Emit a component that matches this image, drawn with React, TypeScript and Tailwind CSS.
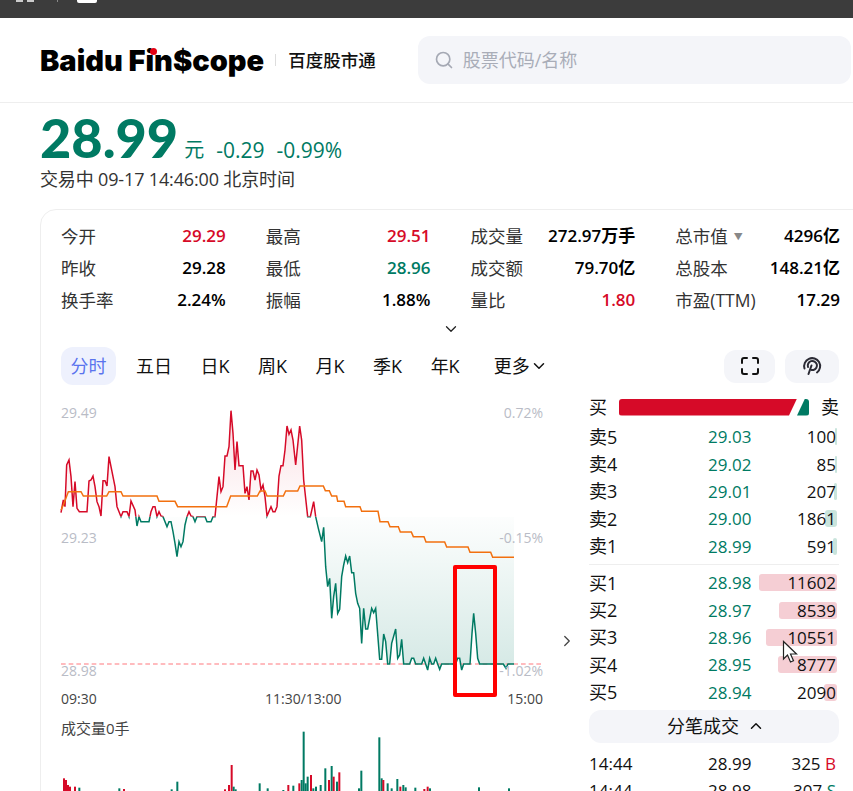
import { ChevronDown, ChevronRight, ChevronUp, Search } from "lucide-react";

// chart coords are 3x page px, origin at page (40,400)
const lineLeft = [[63,338],[70,300],[75,320],[80,195],[87,180],[93,230],[99,320],[105,245],[111,325],[118,335],[141,335],[147,243],[153,240],[159,228],[165,260],[171,305],[177,320],[183,348],[189,242],[195,242],[201,258],[207,170],[213,200],[225,260],[231,320],[243,350],[249,335],[261,335],[267,350],[273,303],[285,330],[291,378],[297,350],[303,365],[327,365],[333,335],[339,320],[345,320],[351,350],[357,335],[363,348],[369,350],[381,380],[387,365],[393,365],[399,395],[405,430],[411,470],[417,425],[423,440],[429,425],[435,375],[441,350],[447,335],[453,348],[459,350],[465,365],[471,350],[495,350],[501,365],[513,365],[519,350],[525,350],[531,290],[537,230],[543,275],[549,260],[555,168],[561,168],[567,140],[573,32],[579,100],[585,210],[591,125],[597,197],[609,197],[615,280],[621,260],[627,300],[633,213],[639,213],[645,240],[651,210],[657,225],[663,270],[669,255],[675,290],[681,348],[693,320],[699,335],[705,335],[711,320],[717,228],[723,197],[729,197],[735,150],[741,78],[747,103],[753,90],[759,120],[767,195]];
const lineRight = [[29,78],[35,120],[41,240],[53,350],[61,350],[71,305],[77,350],[85,385],[95,425],[101,382],[107,500],[113,560],[119,535],[125,655],[131,590],[137,550],[143,640],[149,628],[155,530],[161,495],[167,468],[173,488],[179,468],[185,518],[191,518],[197,580],[203,610],[209,625],[215,730],[221,625],[227,687],[233,687],[245,625],[251,638],[257,625],[269,778],[275,778],[281,702],[287,725],[293,792],[299,792],[305,730],[317,687],[323,775],[329,765],[335,718],[341,792],[359,792],[365,775],[371,775],[377,792],[395,792],[401,775],[407,792],[413,810],[419,775],[425,792],[431,792],[437,775],[443,792],[449,808],[455,792],[497,792],[503,775],[509,775],[515,810],[521,792],[540,792],[546,700],[551,640],[557,700],[563,775],[569,792],[640,792],[648,805],[654,792],[672,792]];
const avgLeft = [[63,330],[70,315],[85,275],[123,275],[130,288],[200,288],[207,275],[243,275],[249,288],[351,288],[357,304],[405,304],[413,320],[560,320],[572,288],[652,288],[660,273],[675,273],[681,288],[730,288],[737,273],[773,273],[780,258]];
const avgRight = [[100,258],[106,272],[118,272],[125,288],[140,288],[143,304],[162,304],[167,320],[210,320],[215,334],[264,334],[270,365],[294,365],[300,380],[325,380],[331,396],[364,396],[370,410],[402,410],[408,426],[464,426],[470,441],[534,441],[540,457],[602,457],[608,472],[672,472]];

const join = (pts: number[][]) => pts.map((p) => p.join(",")).join(" ");
const line = [...lineLeft, ...lineRight.map(([x, y]) => [x + 750, y])];
const avg = [...avgLeft, ...avgRight.map(([x, y]) => [x + 750, y])];
const area = [...line, [line[line.length - 1][0], 350], [line[0][0], 350]];

// x, top, up (true = red)
const volumes: [number, number, boolean][] = [
  [72,1135,true],[78,1140,true],[84,1155,true],[90,1160,true],[105,1160,true],[118,1163,false],[238,1165,false],[252,1167,true],[395,1168,false],[412,1145,false],[555,1168,true],[567,1155,true],[575,1095,true],[581,1160,false],[587,1168,false],[659,1150,false],[683,1165,false],[730,1170,false],[745,1155,true],[760,1157,false],[778,1150,true],[785,1140,false],[791,995,false],[797,1150,false],[803,1130,false],[813,1125,true],[820,1165,false],[828,1160,false],[842,1155,false],[856,1105,false],[867,1140,true],[875,1098,false],[881,1130,true],[891,1145,false],[898,1117,true],[957,1165,false],[964,1112,false],[1018,1012,false],[1025,1135,false],[1030,1140,true],[1043,1150,false],[1055,1165,false],[1072,1137,false],[1081,1160,true],[1090,1155,false],[1097,1162,false],[1126,1163,false],[1153,1167,true],[1163,1160,true],[1170,1165,false],[1317,1162,false],[1407,1165,false],
];

const stats = [
  [["今开", "29.29", "text-[#d60a28]"], ["最高", "29.51", "text-[#d60a28]"], ["成交量", "272.97万手", "text-black"], ["总市值", "4296亿", "text-black"]],
  [["昨收", "29.28", "text-black"], ["最低", "28.96", "text-[#007a63]"], ["成交额", "79.70亿", "text-black"], ["总股本", "148.21亿", "text-black"]],
  [["换手率", "2.24%", "text-black"], ["振幅", "1.88%", "text-black"], ["量比", "1.80", "text-[#d60a28]"], ["市盈(TTM)", "17.29", "text-black"]],
];

const asks = [
  ["卖5", "29.03", "100", 2],
  ["卖4", "29.02", "85", 2],
  ["卖3", "29.01", "207", 3],
  ["卖2", "29.00", "1861", 12],
  ["卖1", "28.99", "591", 4],
] as const;
const bids = [
  ["买1", "28.98", "11602", 78],
  ["买2", "28.97", "8539", 58],
  ["买3", "28.96", "10551", 71],
  ["买4", "28.95", "8777", 59],
  ["买5", "28.94", "2090", 13],
] as const;

const tabs = ["五日", "日K", "周K", "月K", "季K", "年K"];

const DepthRow = ({ label, price, volume, width, color }: { label: string; price: string; volume: string; width: number; color: string }) => (
  <div className="grid h-[27.4px] grid-cols-[119px_42px_1fr] items-center text-[17px] leading-none text-[#111]">
    <span className="text-[18px]">{label}</span>
    <span className="text-[#007a63]">{price}</span>
    <div className="relative flex h-[17px] items-center justify-end pr-[3px]">
      <div className={`absolute top-0 right-[2px] h-[17px] rounded-[3px] ${color}`} style={{ width }} />
      <span className="relative">{volume}</span>
    </div>
  </div>
);

export default function App() {
  return (
    <div className="relative h-[791px] w-[853px] overflow-hidden bg-white font-['Open_Sans','Noto_Sans_CJK_SC',sans-serif]">
      <div className="flex h-[18px] items-start gap-[4px] bg-[#3c3c3c] pl-[16px]">
        <div className="h-[2px] w-[7px] bg-[#ccc]" />
        <div className="h-[2px] w-[7px] bg-[#ccc]" />
        <div className="ml-[19px] h-[2px] w-[1px] bg-[#888]" />
        <div className="ml-[15px] h-[3px] w-[20px] rounded-b-[2px] bg-white" />
      </div>

      <header className="flex h-[85px] items-center border-b border-[#eeeeee] pl-[40px]">
        <div className="relative font-['Inter',sans-serif] text-[29px] leading-none font-black whitespace-nowrap text-black">
          Baidu Fin$cope
          <div className="absolute top-[2px] left-[110px] h-[7px] w-[7px] rounded-full bg-[#e60012]" />
        </div>
        <div className="mr-[12px] ml-[11px] h-[12px] w-[1px] bg-[#ddd]" />
        <div className="text-[17.5px] font-medium whitespace-nowrap text-[#111]">百度股市通</div>
        <div className="ml-[42px] flex h-[48px] w-[433px] items-center gap-[9px] rounded-xl bg-[#f4f5f9] pl-[16px]">
          <Search size={20} strokeWidth={2} className="text-[#a5a9b4]" />
          <span className="text-[18px] text-[#a9adb8]">股票代码/名称</span>
        </div>
      </header>

      <section className="h-[106px] pl-[40px]">
        <div className="flex h-[62px] items-end text-[#007a63]">
          <span className="font-['Lato',sans-serif] text-[54px] leading-[55px] font-black">28.99</span>
          <span className="mb-[1px] ml-[6px] text-[20px] leading-[28px]">元</span>
          <span className="mb-[1px] ml-[12px] text-[21px] leading-[28px] font-medium">-0.29</span>
          <span className="mb-[1px] ml-[12px] text-[21px] leading-[28px] font-medium">-0.99%</span>
        </div>
        <div className="text-[18px] leading-[28px] tracking-[-0.15px] whitespace-nowrap text-[#333]">
          交易中 09-17 14:46:00 北京时间
        </div>
      </section>

      <main className="ml-[40px] h-[600px] w-[840px] rounded-t-2xl border border-[#eeeeee] pt-[10px] pl-[20px]">
        <div className="grid w-[779px] grid-cols-4 gap-x-[40px]">
          {stats.flat().map(([label, value, color]) => (
            <div key={label} className="flex h-[32px] items-center justify-between">
              <span className="flex items-center gap-[6px] text-[17.5px] whitespace-nowrap text-[#333]">
                {label}
                {label === "总市值" && <span className="mt-[1px] text-[9px] text-[#888]">▼</span>}
              </span>
              <span className={`text-[17px] font-semibold whitespace-nowrap ${color}`}>{value}</span>
            </div>
          ))}
        </div>
        <div className="mt-[1px] flex h-[24px] w-[779px] items-center justify-center">
          <ChevronDown size={18} strokeWidth={1.7} className="text-[#222]" />
        </div>

        <div className="mt-[6px] flex h-[38px] w-[778px] items-center text-[18px] text-[#111]">
          <div className="flex h-[38px] w-[55px] items-center justify-center rounded-xl bg-[#eef1fd] text-[#5a74ee]">分时</div>
          <div className="ml-[20px] flex items-center gap-[28.5px]">
            {tabs.map((t) => (
              <span key={t} className="whitespace-nowrap">{t}</span>
            ))}
          </div>
          <div className="ml-[34px] flex items-center">
            更多
            <ChevronDown size={18} strokeWidth={2} />
          </div>
          <div className="ml-auto flex h-[33px] w-[51px] items-center justify-center rounded-xl bg-[#f4f5f9]">
            <svg width="18" height="18" viewBox="0 0 18 18" fill="none" stroke="#111" strokeWidth="2" strokeLinecap="round">
              <path d="M1 6V3a2 2 0 0 1 2-2h3M12 1h3a2 2 0 0 1 2 2v3M17 12v3a2 2 0 0 1-2 2h-3M6 17H3a2 2 0 0 1-2-2v-3" />
            </svg>
          </div>
          <div className="ml-[10px] flex h-[33px] w-[54px] items-center justify-center rounded-xl bg-[#f4f5f9]">
            <svg width="20" height="20" viewBox="0 0 20 20" fill="none" stroke="#2b2b35" strokeWidth="2" strokeLinecap="round">
              <path d="M2.5 12.5A8 8 0 1 1 15 16.5" />
              <path d="M6 11A4.6 4.6 0 1 1 11.5 14H9.5" />
              <path d="M9.5 9.5 6.5 18" />
            </svg>
          </div>
        </div>

        <div className="mt-[13px] flex">
          <div className="relative h-[400px] w-[482px]">
            <svg width="520" height="400" viewBox="0 0 1560 1200" className="absolute top-[2px] left-[-21px]" fill="none">
              <defs>
                <linearGradient id="upFill" gradientUnits="userSpaceOnUse" x1="0" y1="30" x2="0" y2="350">
                  <stop offset="0" stopColor="#d60a28" stopOpacity="0.14" />
                  <stop offset="1" stopColor="#d60a28" stopOpacity="0" />
                </linearGradient>
                <linearGradient id="downFill" gradientUnits="userSpaceOnUse" x1="0" y1="350" x2="0" y2="792">
                  <stop offset="0" stopColor="#007a63" stopOpacity="0.01" />
                  <stop offset="1" stopColor="#007a63" stopOpacity="0.16" />
                </linearGradient>
                <clipPath id="above"><rect x="0" y="0" width="1560" height="350" /></clipPath>
                <clipPath id="below"><rect x="0" y="350" width="1560" height="500" /></clipPath>
              </defs>
              <polygon points={join(area)} fill="url(#upFill)" clipPath="url(#above)" />
              <polygon points={join(area)} fill="url(#downFill)" clipPath="url(#below)" />
              <line x1="63" y1="792" x2="1506" y2="792" stroke="#ffa5a9" strokeWidth="4" strokeDasharray="14 9" />
              <polyline points={join(line)} stroke="#d60a28" strokeWidth="4.5" clipPath="url(#above)" />
              <polyline points={join(line)} stroke="#007a63" strokeWidth="4.5" clipPath="url(#below)" />
              <polyline points={join(avg)} stroke="#f2700f" strokeWidth="4.5" />
              {volumes.map(([x, top, up], i) => (
                <rect key={i} x={x - 3} y={top} width="6" height={1200 - top} fill={up ? "#d60a28" : "#007a63"} />
              ))}
            </svg>

            <span className="absolute top-[6px] left-0 text-[14px] leading-[18px] text-[#b9bcc6]">29.49</span>
            <span className="absolute top-[131px] left-0 text-[14px] leading-[18px] text-[#b9bcc6]">29.23</span>
            <span className="absolute top-[264px] left-0 text-[14px] leading-[18px] text-[#b9bcc6]">28.98</span>
            <span className="absolute top-[6px] right-0 text-[14px] leading-[18px] text-[#b9bcc6]">0.72%</span>
            <span className="absolute top-[131px] right-0 text-[14px] leading-[18px] text-[#b9bcc6]">-0.15%</span>
            <span className="absolute top-[264px] right-0 text-[14px] leading-[18px] text-[#b9bcc6]">-1.02%</span>
            <span className="absolute top-[292px] left-0 text-[14px] leading-[18px] text-[#444]">09:30</span>
            <span className="absolute top-[292px] left-[204px] text-[14px] leading-[18px] text-[#444]">11:30/13:00</span>
            <span className="absolute top-[292px] right-0 text-[14px] leading-[18px] text-[#444]">15:00</span>
            <span className="absolute top-[321px] left-0 text-[15px] leading-[18px] text-[#444]">成交量0手</span>
          </div>

          <div className="flex w-[46px] items-start justify-center pt-[234px] pl-[2px]">
            <ChevronRight size={18} strokeWidth={1.7} className="text-[#444]" />
          </div>

          <div className="w-[250px]">
            <div className="flex h-[18px] items-center justify-between text-[18px] leading-none text-[#111]">
              <span>买</span>
              <div className="flex h-[17px] w-[190px]">
                <div className="h-full w-[178px] rounded-l-[3px] bg-[#d60a28] [clip-path:polygon(0_0,100%_0,calc(100%-8px)_100%,0_100%)]" />
                <div className="h-full w-[12px] rounded-r-[3px] bg-[#007a63] [clip-path:polygon(8px_0,100%_0,100%_100%,0_100%)]" />
              </div>
              <span>卖</span>
            </div>
            <div className="mt-[7px]">
              {asks.map(([label, price, volume, width]) => (
                <DepthRow key={label} label={label} price={price} volume={volume} width={width} color="bg-[#c9e4dc]" />
              ))}
            </div>
            <div className="my-[4px] h-[1px] bg-[#eeeeee]" />
            <div className="mt-[4px]">
              {bids.map(([label, price, volume, width]) => (
                <DepthRow key={label} label={label} price={price} volume={volume} width={width} color="bg-[#f5ced4]" />
              ))}
            </div>
            <div className="mt-[4px] flex h-[33px] items-center justify-center gap-[8px] rounded-xl bg-[#f4f5f9] pl-[4px] text-[18px] text-[#111]">
              分笔成交
              <ChevronUp size={18} strokeWidth={2} />
            </div>
            <div className="mt-[7px] text-[17px] text-[#111]">
              {[
                ["14:44", "28.99", "325", "B", "text-[#d60a28]"],
                ["14:44", "28.98", "307", "S", "text-[#007a63]"],
              ].map(([time, price, vol, side, color], i) => (
                <div key={i} className="grid h-[27.4px] grid-cols-[119px_42px_1fr] items-center">
                  <span>{time}</span>
                  <span>{price}</span>
                  <span className="pr-[3px] text-right">
                    {vol} <span className={color}>{side}</span>
                  </span>
                </div>
              ))}
            </div>
          </div>
        </div>
      </main>

      {/* hand drawn annotation and mouse pointer on top of the shot */}
      <div className="absolute top-[565px] left-[453px] h-[132px] w-[44px] rounded-[2px] border-4 border-[#ff0000]" />
      <svg width="16" height="24" viewBox="0 0 16 24" className="absolute top-[640px] left-[782px]">
        <path d="M1.5 1.5V19l4-4 3 7 3-1.3-3-6.7h6z" fill="#fff" stroke="#222" strokeWidth="1.2" />
      </svg>
    </div>
  );
}
